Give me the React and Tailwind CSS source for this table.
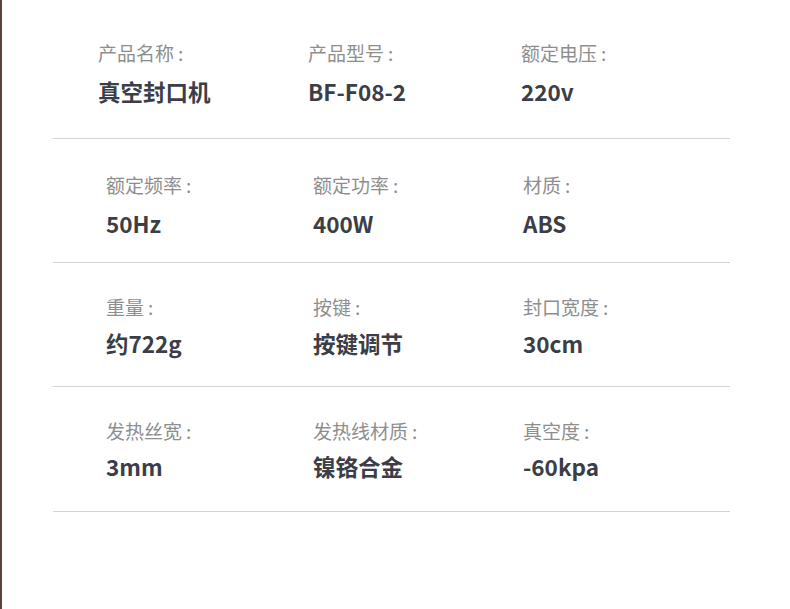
import React from 'react';

const rows = [
    {
        pad: 'pt-[41px] pb-[33px]',
        gap: 'mt-[12px]',
        inset: 'pl-[45px]',
        cols: 'grid-cols-[210px_213px_1fr]',
        items: [
            {label: '产品名称', value: '真空封口机'},
            {label: '产品型号', value: 'BF-F08-2'},
            {label: '额定电压', value: '220v'},
        ],
    },
    {
        pad: 'pt-[34px] pb-[25px]',
        gap: 'mt-[12px]',
        inset: 'pl-[53px]',
        cols: 'grid-cols-[207px_210px_1fr]',
        items: [
            {label: '额定频率', value: '50Hz'},
            {label: '额定功率', value: '400W'},
            {label: '材质', value: 'ABS'},
        ],
    },
    {
        pad: 'pt-[32px] pb-[29px]',
        gap: 'mt-[10px]',
        inset: 'pl-[53px]',
        cols: 'grid-cols-[207px_210px_1fr]',
        items: [
            {label: '重量', value: '约722g'},
            {label: '按键', value: '按键调节'},
            {label: '封口宽度', value: '30cm'},
        ],
    },
    {
        pad: 'pt-[32px] pb-[31px]',
        gap: 'mt-[9px]',
        inset: 'pl-[53px]',
        cols: 'grid-cols-[207px_210px_1fr]',
        items: [
            {label: '发热丝宽', value: '3mm'},
            {label: '发热线材质', value: '镍铬合金'},
            {label: '真空度', value: '-60kpa'},
        ],
    },
];

const SpecCell = ({label, value, gap}) => (
    <div>
        <div className="text-[19px] leading-[24px] text-[#8e8e8e]">
            {label}<span className="ml-[4px]">:</span>
        </div>
        <div className={`${gap} text-[22.5px] leading-[28px] font-bold text-[#3b3e47]`}>{value}</div>
    </div>
);

export default function App() {
    return (
        <div
            className="w-[790px] h-[609px] bg-white border-l-2 border-[#5a433d] overflow-hidden"
            style={{fontFamily: '"Noto Sans CJK SC", "Noto Sans", sans-serif'}}
        >
            {/* spec table */}
            <div className="ml-[51px] w-[677px]">
                {rows.map((row, i) => (
                    <div key={i} className={`${row.pad} ${row.inset} border-b border-[#d3d3d3]`}>
                        <div className={`grid ${row.cols}`}>
                            {row.items.map((item) => (
                                <SpecCell key={item.label} label={item.label} value={item.value} gap={row.gap}/>
                            ))}
                        </div>
                    </div>
                ))}
            </div>
        </div>
    );
}
